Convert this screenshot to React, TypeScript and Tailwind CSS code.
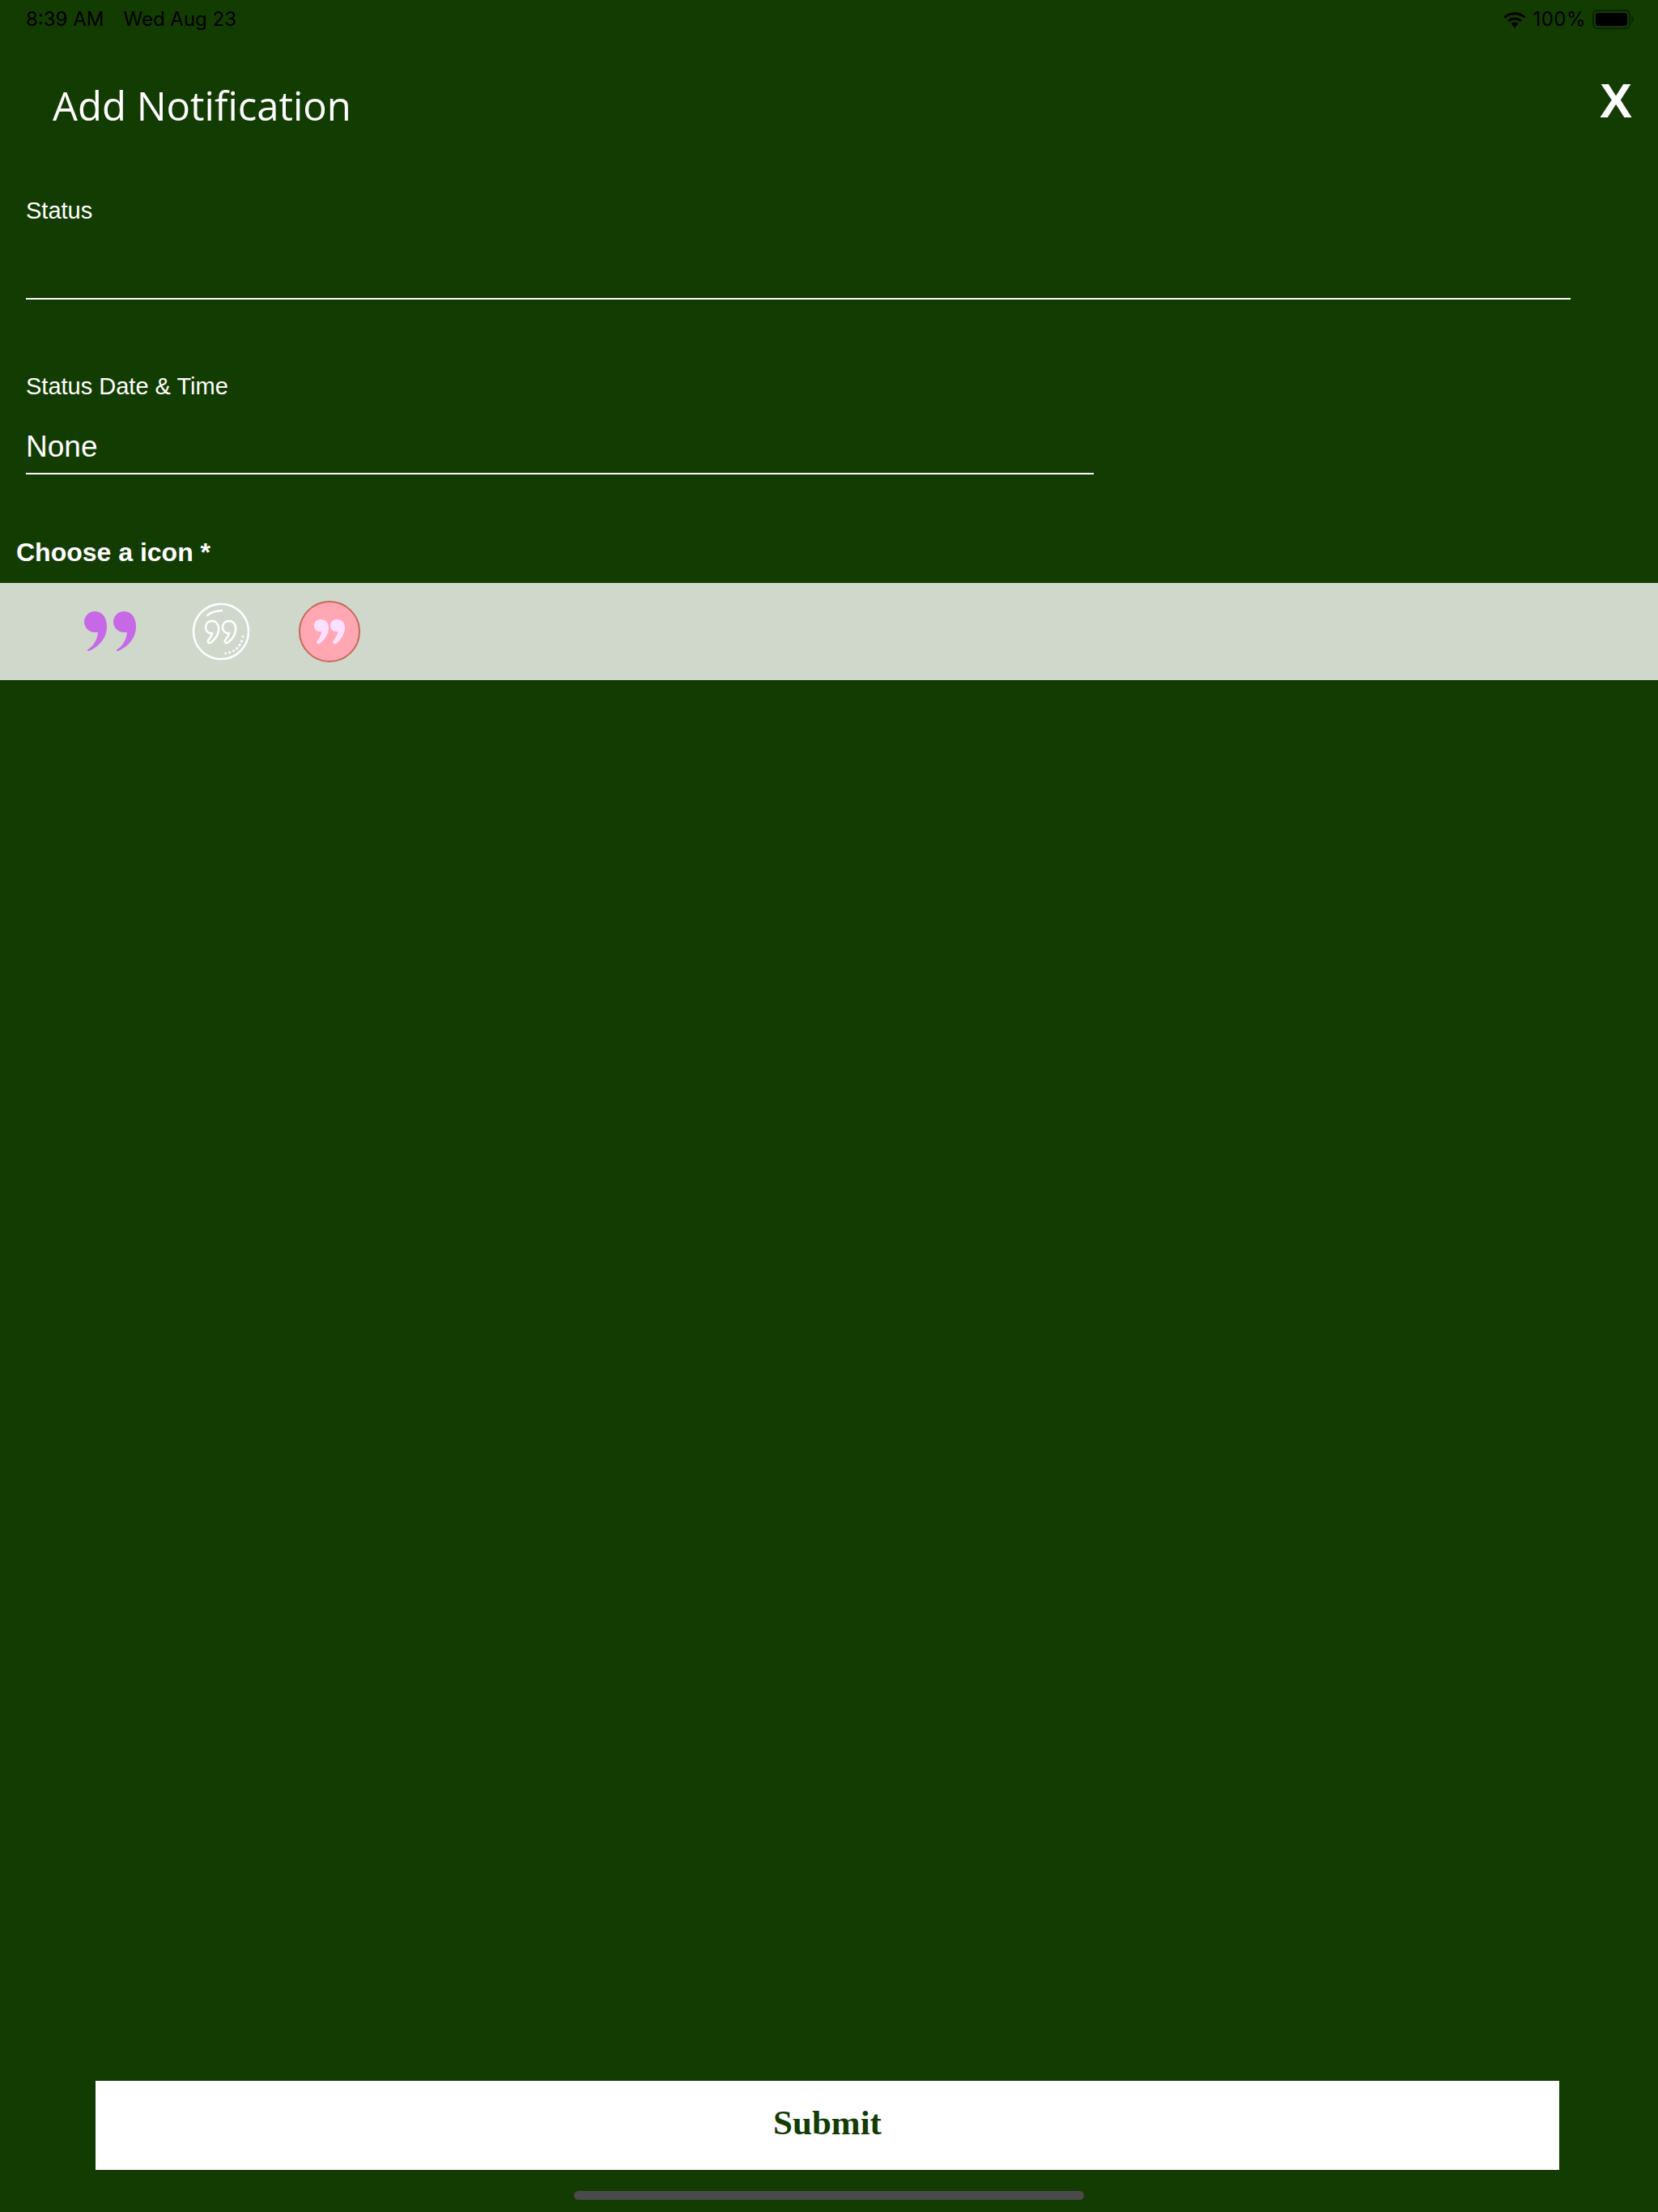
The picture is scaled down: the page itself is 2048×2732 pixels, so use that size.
import React from 'react';

const commaPath =
  'M13 0C23 0 28 9 28 19C28 33 18 44 6 49C4 49.5 3 48 5 47C12 42 16 35 17 26C15 26 14 26 13 26C6 26 0 20 0 13C0 6 6 0 13 0Z';

const WifiIcon = () => (
  <svg width="28" height="21" viewBox="0 0 28 21" fill="none">
    <path d="M1.5 7.5C8.5 1 19.5 1 26.5 7.5" stroke="#000" strokeWidth="3" />
    <path d="M6 12C10.5 8 17.5 8 22 12" stroke="#000" strokeWidth="3" />
    <path d="M9.5 15L14 20.5L18.5 15C16 13 12 13 9.5 15Z" fill="#000" />
  </svg>
);

const BatteryIcon = () => (
  <div className="flex items-center">
    <div className="w-[47px] h-[24px] rounded-[6px] border-2 border-[#0a2402] p-[2px]">
      <div className="w-full h-full rounded-[3px] bg-black" />
    </div>
    <div className="w-[3px] h-[8px] ml-[1px] rounded-r-full bg-[#0a2402]" />
  </div>
);

const PurpleQuote = () => (
  <svg width="64" height="50" viewBox="0 0 64 50">
    <path d={commaPath} fill="#c769e6" />
    <path d={commaPath} fill="#c769e6" transform="translate(36 0)" />
  </svg>
);

const dashes = [
  [42, 62, 41, 64],
  [47, 60.5, 46, 63],
  [52, 58.5, 51, 61],
  [56.5, 55.5, 55, 58],
  [60, 51.5, 58, 54],
  [62.5, 47, 60.5, 49],
  [64, 41.5, 62, 43],
];

const outlineComma = 'M25 23C31 23 34 29 33 35C32 42 27 47 23 50C21 51 19 49 20 47C22 44 25 41 25 38C20 39 17 35 17 31C17 26 20 23 25 23Z';

const pinkComma = 'M27 23C33 23 37 27 37 33C37 42 31 49 26 53C24 54.5 21 52 22.5 50C25 46 27.5 43 28.500 38C23.5 39 19 36 19 31C19 26 22 23 27 23Z';

const OutlineQuote = () => (
  <svg width="72" height="72" viewBox="0 0 72 72" fill="none" stroke="#fff" strokeWidth="2.5">
    <circle cx="36" cy="36" r="34" />
    <path d="M19 16C24 12 30 10.5 37 10" strokeLinecap="round" />
    <path d={outlineComma} />
    <path d={outlineComma} transform="translate(21 0)" />
    {dashes.map(([x1, y1, x2, y2]) => (
      <line key={x1} x1={x1} y1={y1} x2={x2} y2={y2} />
    ))}
  </svg>
);

const PinkQuote = () => (
  <svg width="76" height="76" viewBox="0 0 76 76">
    <circle cx="38" cy="38" r="37" fill="#ffa8b4" stroke="#c46a58" strokeWidth="2" />
    <path d={pinkComma} fill="#fde0ff" />
    <path d={pinkComma} fill="#fde0ff" transform="translate(20 0)" />
  </svg>
);

const App: React.FC = () => {
  return (
    <div className="w-[2048px] h-[2732px] flex flex-col bg-[#133c03] font-['Liberation_Sans',sans-serif] text-white">
      {/* Status bar */}
      <div className="h-[48px] flex items-center justify-between pl-[32px] pr-[30px] text-black text-[24px] font-['Inter',sans-serif]">
        <div className="flex gap-[24px]">
          <span>8:39 AM</span>
          <span>Wed Aug 23</span>
        </div>
        <div className="flex items-center gap-[8px]">
          <WifiIcon />
          <span className="tracking-[0.5px]">100%</span>
          <BatteryIcon />
        </div>
      </div>

      {/* Header */}
      <div className="h-[84px] mt-[40px] flex items-center justify-between pl-[65px] pr-[32px]">
        <h1 className="text-[49px] font-medium font-['Open_Sans',sans-serif] leading-none">Add Notification</h1>
        <button className="text-[60px] font-bold leading-none mb-[10px]">X</button>
      </div>

      {/* Form */}
      <div className="pl-[32px] pt-[72px]">
        <label className="block text-[29px] leading-[32px]">Status</label>
        <div className="w-[1908px] h-[94px] border-b-2 border-white" />
      </div>
      <div className="pl-[32px] pt-[91px]">
        <label className="block text-[29px] leading-[32px]">Status Date &amp; Time</label>
        <div className="w-[1319px] h-[93px] pt-[38px] border-b-2 border-white text-[37px] leading-[42px]">None</div>
      </div>

      <div className="pl-[20px] pt-[76px] pb-[18px] text-[32px] font-bold leading-[40px]">Choose a icon *</div>
      <div className="h-[120px] flex items-center pl-[104px] bg-[#d0d8cc]">
        <PurpleQuote />
        <div className="ml-[69px]"><OutlineQuote /></div>
        <div className="ml-[60px]"><PinkQuote /></div>
      </div>

      {/* Footer */}
      <div className="mt-auto flex flex-col items-center">
        <button className="w-[1808px] h-[110px] ml-[-4px] pb-[6px] bg-white text-[#133c03] text-[43px] font-bold font-['Liberation_Serif',serif]">
          Submit
        </button>
        <div className="w-[630px] h-[11px] mt-[26px] mb-[15px] rounded-full bg-[#4a4a4a]" />
      </div>
    </div>
  );
};

export default App;
